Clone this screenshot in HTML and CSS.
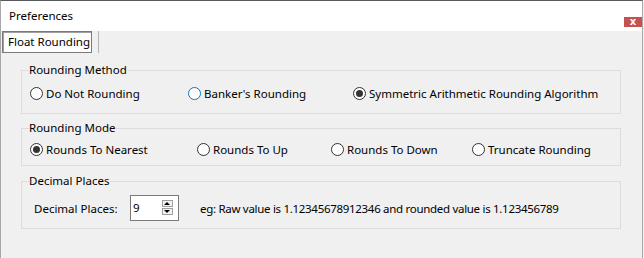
FILE: index.html
```html
<!DOCTYPE html>
<html lang="en">

<head>
    <meta charset="UTF-8">
    <meta name="viewport" content="width=device-width, initial-scale=1.0">
    <title>Preferences</title>
    <link rel="stylesheet" href="styles.css">
</head>

<body>
    <div class="window">
        <div class="titlebar">
            <span class="title">Preferences</span>
            <span class="close">x</span>
        </div>

        <div class="tabs">
            <div class="tab">Float Rounding</div>
            <div class="tab-sep"></div>
        </div>

        <div class="content">
            <fieldset class="group g-method">
                <legend>Rounding Method</legend>
                <div class="row">
                    <label class="opt w158"><span class="radio"></span>Do Not Rounding</label>
                    <label class="opt w165"><span class="radio hover"></span>Banker's Rounding</label>
                    <label class="opt"><span class="radio on"></span>Symmetric Arithmetic Rounding Algorithm</label>
                </div>
            </fieldset>

            <fieldset class="group g-mode">
                <legend>Rounding Mode</legend>
                <div class="row">
                    <label class="opt w167"><span class="radio on"></span>Rounds To Nearest</label>
                    <label class="opt w134"><span class="radio"></span>Rounds To Up</label>
                    <label class="opt w141"><span class="radio"></span>Rounds To Down</label>
                    <label class="opt"><span class="radio"></span>Truncate Rounding</label>
                </div>
            </fieldset>

            <fieldset class="group g-places">
                <legend>Decimal Places</legend>
                <div class="row places">
                    <span class="places-label">Decimal Places:</span>
                    <div class="spin">
                        <span class="spin-value">9</span>
                        <div class="spin-btns">
                            <span class="spin-btn up"></span>
                            <span class="spin-btn down"></span>
                        </div>
                    </div>
                    <span class="example">eg: Raw value is 1.12345678912346 and rounded value is 1.123456789</span>
                </div>
            </fieldset>
        </div>
    </div>
</body>

</html>
```
FILE: styles.css
```css
* {
    margin: 0;
    padding: 0;
    box-sizing: border-box;
}

body {
    background: #f0f0f0;
    font: 11.5px "Noto Sans", "Open Sans", sans-serif;
    color: #000;
}

.window {
    width: 643px;
    height: 258px;
    border-top: 1px solid #5a5a5a;
    border-left: 1px solid #a8a8a8;
    border-right: 1px solid #a8a8a8;
    background: #f0f0f0;
}

/* 타이틀바 */
.titlebar {
    display: flex;
    height: 30px;
    padding-left: 8px;
    background: #fff;
}

.title {
    line-height: 30px;
}

.close {
    align-self: flex-end;
    margin: 0 0 4px auto;
    width: 18px;
    height: 10px;
    background: #c75050;
    color: #fff;
    font: bold 10px "DejaVu Sans", sans-serif;
    line-height: 9px;
    text-align: center;
}

/* 탭 */
.tabs {
    display: flex;
    height: 22px;
    padding-left: 1px;
}

.tab {
    width: 90px;
    border: 1px solid #7a7a7a;
    box-shadow: inset 1px 1px 0 #a0a0a0;
    background: #fdfdfd;
    padding-left: 5px;
    line-height: 19px;
    white-space: nowrap;
}

.tab-sep {
    width: 1px;
    margin-left: 6px;
    background: #b4b4b4;
}

.content {
    padding: 9px 21px 0 20px;
}

/* 그룹박스 */
.group {
    border: 1px solid #dcdcdc;
    padding: 0 8px;
}

.group legend {
    margin-left: -1px;
    padding: 0 1px 0 0;
    line-height: 16px;
}

.g-method {
    padding-top: 5px;
    padding-bottom: 10px;
}

.g-mode {
    margin-top: 6px;
    padding-top: 3px;
    padding-bottom: 6px;
}

.g-places {
    margin-top: 7px;
    padding-top: 6px;
    padding-bottom: 7px;
}

.row {
    display: flex;
    align-items: center;
    height: 20px;
}

.opt {
    display: flex;
    align-items: center;
    gap: 3px;
    white-space: nowrap;
}

.w158 { width: 158px; }
.w165 { width: 165px; }
.w167 { width: 167px; }
.w134 { width: 134px; }
.w141 { width: 141px; }

.radio {
    position: relative;
    width: 13px;
    height: 13px;
    border: 1px solid #333;
    border-radius: 50%;
    background: #fff;
}

.radio.hover {
    border-color: #0078d7;
}

.radio.on::after {
    content: "";
    position: absolute;
    top: 2px;
    left: 2px;
    width: 7px;
    height: 7px;
    border-radius: 50%;
    background: #333;
}

/* 소수 자리 */
.row.places {
    height: 26px;
}

.places-label {
    width: 96px;
    margin-left: 4px;
}

.spin {
    display: flex;
    align-items: flex-start;
    width: 49px;
    height: 26px;
    border: 1px solid #7a7a7a;
    background: #fff;
    margin-right: 21px;
}

.spin-value {
    flex: 1;
    padding-left: 2px;
    line-height: 23px;
}

.spin-btns {
    display: flex;
    flex-direction: column;
    gap: 1px;
    margin: 4px 5px 0 0;
}

.spin-btn {
    position: relative;
    width: 11px;
    height: 7px;
    border: 1px solid #a0a0a0;
    background: #f3f3f3;
}

.spin-btn::after {
    content: "";
    position: absolute;
    left: 1px;
    border-left: 3.5px solid transparent;
    border-right: 3.5px solid transparent;
}

.spin-btn.up::after {
    top: 1px;
    border-bottom: 3px solid #000;
}

.spin-btn.down::after {
    top: 1px;
    border-top: 3px solid #000;
}

.example {
    letter-spacing: -0.3px;
    white-space: nowrap;
}
```
